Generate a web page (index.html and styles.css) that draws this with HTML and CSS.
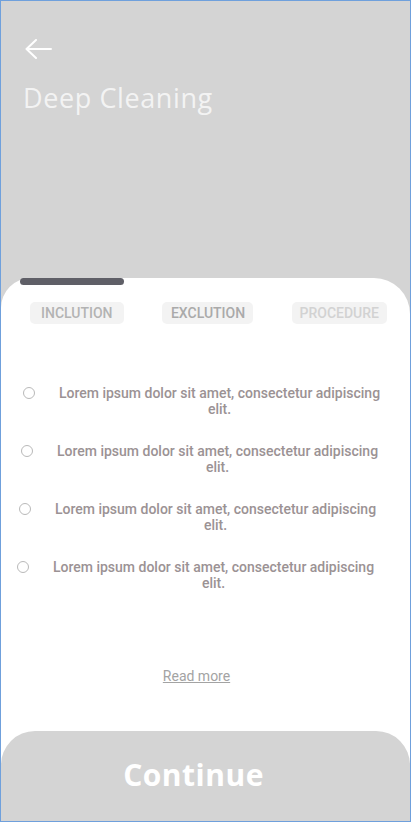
FILE: index.html
```html
<!DOCTYPE html>
<html>
<head>
<meta charset="utf-8">
<link rel="stylesheet" href="styles.css">
</head>
<body>
<div class="screen">
  <header class="hero">
    <svg class="back" width="28" height="20" viewBox="0 0 28 20">
      <path d="M27 10H3M12 1L2.5 10L12 19" fill="none" stroke="#ffffff" stroke-width="2" stroke-linecap="round" stroke-linejoin="round"/>
    </svg>
    <h1 class="title">Deep Cleaning</h1>
  </header>
  <section class="sheet">
    <div class="handle"></div>
    <nav class="tabs">
      <span class="tab tab-in">INCLUTION</span>
      <span class="tab tab-ex">EXCLUTION</span>
      <span class="tab tab-pr">PROCEDURE</span>
    </nav>
    <ul class="list">
      <li class="item"><span class="dot"></span><p class="text">Lorem ipsum dolor sit amet, consectetur adipiscing elit.</p></li>
      <li class="item"><span class="dot"></span><p class="text">Lorem ipsum dolor sit amet, consectetur adipiscing elit.</p></li>
      <li class="item"><span class="dot"></span><p class="text">Lorem ipsum dolor sit amet, consectetur adipiscing elit.</p></li>
      <li class="item"><span class="dot"></span><p class="text">Lorem ipsum dolor sit amet, consectetur adipiscing elit.</p></li>
    </ul>
    <a class="more" href="#">Read more</a>
    <button class="continue">Continue</button>
  </section>
</div>
</body>
</html>
```
FILE: styles.css
```css
* { box-sizing: border-box; }
html, body { margin: 0; padding: 0; }
body { font-family: Roboto, "Liberation Sans", sans-serif; }
.screen {
  width: 411px;
  height: 822px;
  border: 1px solid #6fa0dc;
  background: #d4d4d4;
  display: flex;
  flex-direction: column;
  overflow: hidden;
}
.hero {
  height: 277px;
  padding: 38px 0 0 22px;
  flex-shrink: 0;
}
.back { display: block; margin-left: 1px; }
.title {
  margin: 22px 0 0 0;
  font-family: "Open Sans", sans-serif;
  font-weight: 500;
  font-size: 27px;
  line-height: 34px;
  color: #f3f3f3;
  letter-spacing: 0.6px;
}
.sheet {
  flex: 1;
  background: #ffffff;
  border-radius: 30px 36px 0 0;
  display: flex;
  flex-direction: column;
}
.handle {
  width: 104px;
  height: 7px;
  background: #5f5f67;
  border-radius: 4px;
  margin-left: 19px;
}
.tabs {
  display: flex;
  justify-content: space-between;
  padding: 17px 23px 0 29px;
}
.tab {
  background: #f3f3f3;
  border-radius: 5px;
  font-size: 14px;
  font-weight: 500;
  line-height: 22px;
  padding: 0 8px;
}
.tab-in { color: #b3b3b3; padding: 0 11px 0 11px; }
.tab-ex { color: #aaaaaa; padding: 0 8px 0 9px; }
.tab-pr { color: #d2d2d2; padding: 0 8px 0 8px; }
.list {
  list-style: none;
  margin: 0;
  padding: 61px 0 0 0;
  display: flex;
  flex-direction: column;
  gap: 26px;
}
.item {
  display: flex;
  align-items: flex-start;
  padding-left: 22px;
  width: 400px;
}
.item:nth-child(2) { padding-left: 20px; }
.item:nth-child(3) { padding-left: 18px; }
.item:nth-child(4) { padding-left: 16px; }
.dot {
  width: 12px;
  height: 12px;
  border: 1.5px solid #b9b9b9;
  border-radius: 50%;
  margin-top: 2px;
  flex-shrink: 0;
}
.text {
  margin: 0 0 0 12px;
  width: 345px;
  text-align: center;
  font-size: 14px;
  font-weight: 500;
  line-height: 16px;
  color: #9b9294;
}
.more {
  align-self: center;
  margin: 77px 0 0 -18px;
  font-size: 14px;
  color: #a3a3a3;
  text-decoration: underline;
  line-height: 16px;
}
.continue {
  margin-top: auto;
  height: 90px;
  border: none;
  background: #d4d4d4;
  border-radius: 34px 34px 0 0;
  font-family: "Open Sans", sans-serif;
  font-weight: 700;
  font-size: 30px;
  letter-spacing: 0.5px;
  color: #ffffff;
  padding: 0 24px 4px 0;
}
```
